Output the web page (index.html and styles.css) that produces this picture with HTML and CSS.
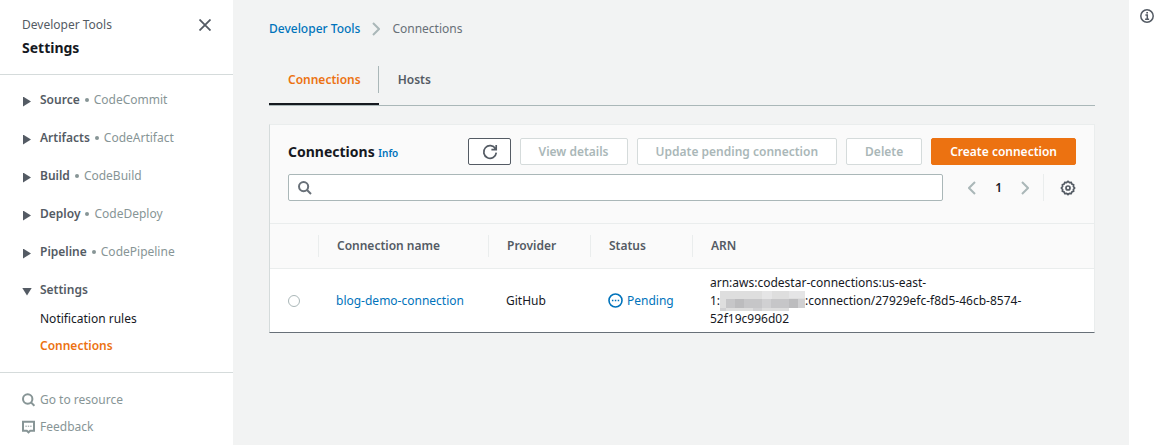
FILE: index.html
```html
<!DOCTYPE html>
<html lang="en">
<head>
<meta charset="utf-8">
<meta name="viewport" content="width=device-width, initial-scale=1">
<title>Connections - Developer Tools</title>
<link rel="stylesheet" href="styles.css">
</head>
<body>
<div class="app">
  <nav class="sidebar" aria-label="Developer Tools">
    <header class="side-head">
      <div>
        <div class="side-sub">Developer Tools</div>
        <h2 class="side-title">Settings</h2>
      </div>
      <button class="icon-btn close" type="button" aria-label="Close navigation">
        <svg width="12" height="12" viewBox="0 0 12 12"><path d="M.5.5l11 11M11.5.5l-11 11"/></svg>
      </button>
    </header>
    <ul class="side-list">
      <li><button class="group" type="button"><span class="caret"></span><b>Source</b><i class="dot"></i><span class="service">CodeCommit</span></button></li>
      <li><button class="group" type="button"><span class="caret"></span><b>Artifacts</b><i class="dot"></i><span class="service">CodeArtifact</span></button></li>
      <li><button class="group" type="button"><span class="caret"></span><b>Build</b><i class="dot"></i><span class="service">CodeBuild</span></button></li>
      <li><button class="group" type="button"><span class="caret"></span><b>Deploy</b><i class="dot"></i><span class="service">CodeDeploy</span></button></li>
      <li><button class="group" type="button"><span class="caret"></span><b>Pipeline</b><i class="dot"></i><span class="service">CodePipeline</span></button></li>
      <li>
        <button class="group" type="button" aria-expanded="true"><span class="caret open"></span><b>Settings</b></button>
        <ul class="sub-list">
          <li><a href="#">Notification rules</a></li>
          <li><a class="current" href="#" aria-current="page">Connections</a></li>
        </ul>
      </li>
    </ul>
    <div class="side-foot">
      <a href="#"><svg width="13" height="14" viewBox="0 0 13 14"><circle cx="5.7" cy="6" r="4.7"/><path d="M9 9.4l3.4 3.4"/></svg>Go to resource</a>
      <a href="#"><svg width="13" height="14" viewBox="0 0 13 14"><path d="M1 1.8h11v9H8.2L6.5 12.3 4.8 10.8H1z"/><path class="thin" d="M3.4 6.2h1.4M5.8 6.2h1.4M8.2 6.2h1.4"/></svg>Feedback</a>
    </div>
  </nav>

  <main class="main">
    <nav class="crumbs" aria-label="Breadcrumb">
      <a href="#">Developer Tools</a>
      <svg width="8" height="14" viewBox="0 0 8 14"><path d="M1 1l6 6-6 6"/></svg>
      <span>Connections</span>
    </nav>

    <div class="tabs" role="tablist">
      <button class="tab active" type="button" role="tab" aria-selected="true">Connections</button>
      <button class="tab" type="button" role="tab" aria-selected="false">Hosts</button>
    </div>

    <section class="panel">
      <div class="panel-head">
        <div class="title-row">
          <h1 class="title">Connections <a class="info" href="#">Info</a></h1>
          <div class="actions">
            <button class="btn refresh" type="button" aria-label="Refresh">
              <svg width="16" height="16" viewBox="0 0 16 16"><path d="M13.5 4.8A6.3 6.3 0 1 0 14.3 8.6M14.2 1v4.6H9.4"/></svg>
            </button>
            <button class="btn" type="button" disabled>View details</button>
            <button class="btn" type="button" disabled>Update pending connection</button>
            <button class="btn" type="button" disabled>Delete</button>
            <button class="btn primary" type="button">Create connection</button>
          </div>
        </div>
        <div class="filter-row">
          <label class="search">
            <svg width="14" height="14" viewBox="0 0 14 14"><circle cx="5.6" cy="5.6" r="4.6"/><path d="M9 9l4 4"/></svg>
            <input type="search" aria-label="Find connections">
          </label>
          <div class="pager">
            <button class="icon-btn" type="button" aria-label="Previous page"><svg width="8" height="14" viewBox="0 0 8 14"><path d="M7 1L1 7l6 6"/></svg></button>
            <b>1</b>
            <button class="icon-btn" type="button" aria-label="Next page"><svg width="8" height="14" viewBox="0 0 8 14"><path d="M1 1l6 6-6 6"/></svg></button>
          </div>
          <button class="icon-btn gear" type="button" aria-label="Preferences">
            <svg width="16" height="16" viewBox="0 0 16 16"><path d="M6.6 2.5L8 1.4l1.4 1.1 1.8-.2.7 1.7 1.7.7-.2 1.8L14.6 8l-1.2 1.4.2 1.8-1.7.7-.7 1.7-1.8-.2L8 14.6l-1.4-1.2-1.8.2-.7-1.7-1.7-.7.2-1.8L1.4 8l1.2-1.5-.2-1.8L4.1 4l.7-1.7z"/><circle cx="8" cy="8" r="2"/></svg>
          </button>
        </div>
      </div>
      <table class="table">
        <colgroup><col class="c-pick"><col class="c-name"><col class="c-prov"><col class="c-stat"><col></colgroup>
        <thead>
          <tr><th aria-label="Select"></th><th><span>Connection name</span></th><th><span>Provider</span></th><th><span>Status</span></th><th><span>ARN</span></th></tr>
        </thead>
        <tbody>
          <tr>
            <td><input class="radio" type="radio" name="connection" aria-label="blog-demo-connection"></td>
            <td><a href="#">blog-demo-connection</a></td>
            <td>GitHub</td>
            <td><span class="status"><svg width="15" height="15" viewBox="0 0 15 15"><circle cx="7.5" cy="7.5" r="6.5"/><path d="M3.9 7.5h1.5M6.8 7.5h1.5M9.7 7.5h1.5"/></svg>Pending</span></td>
            <td class="arn">arn:aws:codestar-connections:us-east-<br>1:<svg class="redacted" width="85" height="20" viewBox="0 0 85 20" aria-hidden="true"><path fill="#dedede" d="M0 0h85v17H69v3H0z"/><path fill="#d0d0d2" d="M6 8h79v9H6zM0 17h6v3H0zM33 17h9v3h-9z"/><path fill="#e5e5e6" d="M42 0h10v8H42zM69 0h16v7H69z"/><path fill="#c6c6c8" d="M6 8h9v9H6zM24 8h18v9H24zM51 8h18v9H51z"/><path fill="#bcbcbe" d="M15 8h9v9h-9zM69 8h9v9h-9z"/></svg>:connection/27929efc-f8d5-46cb-8574-<br>52f19c996d02</td>
          </tr>
        </tbody>
      </table>
    </section>
  </main>

  <aside class="rail">
    <button class="icon-btn" type="button" aria-label="Open help panel">
      <svg width="16" height="16" viewBox="0 0 16 16"><circle cx="8" cy="8" r="6.2"/><path d="M6.4 7h1.9v4.2M6.1 11.2h4M7.3 4.7h1.7"/></svg>
    </button>
  </aside>
</div>
</body>
</html>
```
FILE: styles.css
```css
* { box-sizing: border-box; }

body {
  margin: 0;
  font: 12px/18px "Noto Sans", "Open Sans", sans-serif;
  color: #16191f;
  background: #f2f3f3;
}

button { font: inherit; color: inherit; cursor: pointer; }
a { color: #0073bb; text-decoration: none; }
b { font-weight: 600; }
ul { list-style: none; margin: 0; padding: 0; }
h1, h2 { margin: 0; }
svg { display: block; flex: none; fill: none; stroke: currentColor; stroke-width: 2; }

.app {
  display: grid;
  grid-template-columns: 233px minmax(0, 1fr) 31px;
  min-height: 100vh;
}

.icon-btn { border: 0; background: none; padding: 0; display: flex; }

/* Side navigation */
.sidebar { background: #fff; }
.side-head {
  display: flex;
  justify-content: space-between;
  align-items: flex-start;
  padding: 16px 22px;
  border-bottom: 1px solid #d5dbdb;
}
.side-sub { color: #545b64; }
.side-title { font-size: 14px; line-height: 20px; margin-top: 4px; }
.close { color: #545b64; margin-top: 3px; }
.close svg { stroke-width: 1.8; }

.side-list { padding: 16px 22px 17px; border-bottom: 1px solid #d5dbdb; }
.side-list > li { min-height: 38px; }
.group {
  display: flex;
  align-items: center;
  width: 100%;
  height: 18px;
  padding: 0;
  border: 0;
  background: none;
  color: #545b64;
}
.caret {
  width: 8px;
  height: 10px;
  margin: 3px 9px 0 1px;
  background: #545b64;
  clip-path: polygon(0 0, 100% 50%, 0 100%);
}
.caret.open { width: 10px; height: 8px; margin: 3px 8px 0 0; clip-path: polygon(0 0, 100% 0, 50% 100%); }
.dot { width: 4px; height: 4px; margin: 0 5px; border-radius: 50%; background: #879596; }
.service { color: #879596; }
.sub-list { display: grid; gap: 9px; padding: 11px 0 0 18px; }
.sub-list a { display: block; color: #16191f; }
.sub-list .current { color: #ec7211; font-weight: 600; }

.side-foot { display: grid; gap: 9px; padding: 18px 22px; }
.side-foot a { display: flex; align-items: center; gap: 5px; color: #879596; }
.side-foot .thin { stroke-width: 1; }

/* Main column */
.main { padding: 20px 34px 40px 36px; }
.crumbs { display: flex; align-items: center; gap: 12px; color: #687078; }
.crumbs a { font-weight: 500; }
.crumbs svg { color: #aab7b8; }

.tabs { display: flex; margin-top: 28px; border-bottom: 1px solid #aab7b8; }
.tab {
  display: flex;
  position: relative;
  height: 39px;
  padding: 5px 18px 0 19px;
  border: 0;
  background: none;
  color: #545b64;
  font-weight: 600;
}
.tab.active { color: #ec7211; border-bottom: 2px solid #16191f; }
.tab.active::after {
  content: "";
  position: absolute;
  right: 0;
  top: 0;
  height: 27px;
  border-right: 1px solid #aab7b8;
}

.panel {
  margin-top: 18px;
  background: #fff;
  border: 1px solid #eaeded;
  border-left-color: #d5dbdb;
  border-bottom-color: #687078;
}
.panel-head { padding: 13px 18px 22px; background: #fafafa; border-bottom: 1px solid #eaeded; }
.title-row { display: flex; justify-content: space-between; align-items: center; }
.title { font-size: 14px; line-height: 20px; padding-top: 2px; }
.info { font-size: 10px; font-weight: 600; }
.actions { display: flex; gap: 9px; }
.btn {
  height: 27px;
  padding: 1px 18px 0;
  border: 1px solid #545b64;
  border-radius: 2px;
  background: #fff;
  color: #545b64;
  font-weight: 600;
}
.btn:disabled { border-color: #d5dbdb; color: #aab7b8; cursor: default; }
.btn.primary { background: #ec7211; border-color: #ec7211; color: #fff; }
.refresh { width: 43px; padding: 0 13px; }
.refresh svg { stroke-width: 1.7; }

.filter-row { display: flex; align-items: center; margin-top: 9px; }
.search {
  display: flex;
  align-items: center;
  flex: 1;
  gap: 8px;
  height: 27px;
  padding: 0 9px;
  border: 1px solid #aab7b8;
  border-radius: 2px;
  background: #fff;
  color: #687078;
}
.search input { flex: 1; min-width: 0; border: 0; outline: 0; background: none; font: inherit; }
.pager { display: flex; align-items: center; gap: 19px; margin: 0 14px 0 25px; }
.pager .icon-btn { color: #aab7b8; }
.gear { align-items: center; height: 27px; padding-left: 16px; border-left: 1px solid #eaeded; color: #545b64; }
.gear svg { stroke-width: 1.7; }

/* Connections table */
.table { width: 100%; border-collapse: collapse; table-layout: fixed; text-align: left; }
.c-pick { width: 48px; }
.c-name { width: 170px; }
.c-prov, .c-stat { width: 102px; }
.table thead { background: #fafafa; border-bottom: 1px solid #eaeded; }
.table th { height: 44px; padding: 0; color: #545b64; font-weight: 600; }
.table th span { display: block; padding: 2px 18px; border-left: 1px solid #eaeded; }
.table td { padding: 5px 0 4px 18px; }
.radio {
  display: block;
  appearance: none;
  width: 12px;
  height: 12px;
  margin: 0;
  border: 1px solid #aab7b8;
  border-radius: 50%;
}
.radio:checked { border: 4px solid #0073bb; }
.status { display: flex; align-items: center; gap: 4px; color: #0073bb; }
.status svg { stroke-width: 1.6; }
.redacted { display: inline-block; vertical-align: middle; margin: -4px 0; stroke: none; }

/* Help rail */
.rail { background: #fff; padding: 8px 0 0 10px; }
.rail .icon-btn { color: #545b64; }
.rail svg { stroke-width: 1.5; }
```
